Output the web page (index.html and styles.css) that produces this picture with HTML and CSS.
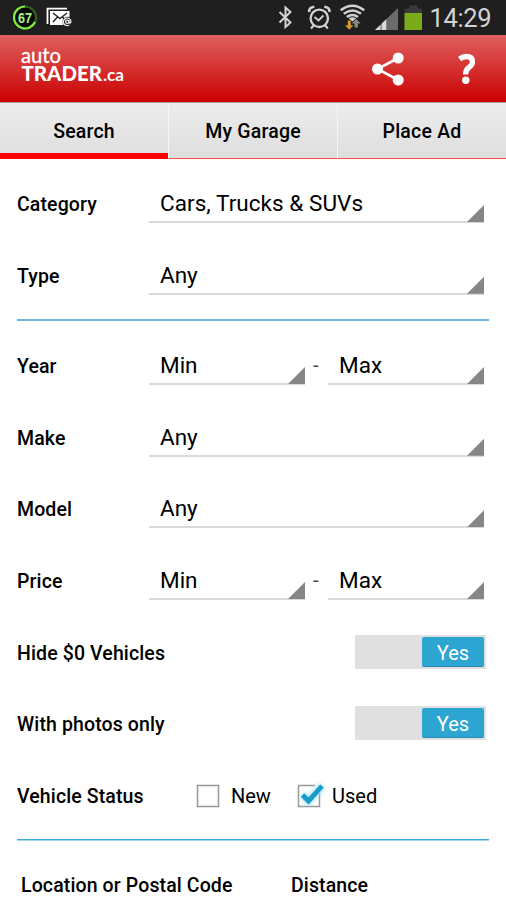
FILE: index.html
```html
<!DOCTYPE html>
<html lang="en">
<head>
<meta charset="utf-8">
<title>autoTRADER.ca</title>
<link rel="stylesheet" href="styles.css">
</head>
<body>
<div class="screen">
<div class="status">
  <svg width="506" height="35" viewBox="0 0 506 35">
    <circle cx="25" cy="17.500" r="11" fill="#050805" stroke="#33651e" stroke-width="2"/>
    <path d="M25 6.500A11 11 0 1 0 35 22" fill="none" stroke="#83ed40" stroke-width="2.200"/>
    <text class="pct" x="18" y="22.500" textLength="14" lengthAdjust="spacingAndGlyphs">67</text>
    <path d="M47.500 24V8.700H67" fill="none" stroke="#fff" stroke-width="1.800"/>
    <path d="M50 11h19.500v14H50z" fill="#fff"/>
    <path d="M53 13l7 5.500 7-5.500M53 22l4.500-5M65 20l-2.500-3" fill="none" stroke="#222" stroke-width="1.400"/>
    <circle cx="67.500" cy="21.800" r="5" fill="#222"/>
    <circle cx="67.300" cy="21.800" r="1.700" fill="none" stroke="#fff" stroke-width="1.100"/>
    <path d="M69 20v2.800q2 1 2-1.500a3.800 3.800 0 1 0-1.600 3.600" fill="none" stroke="#fff" stroke-width="1.100"/>
    <path d="M279.500 12l11 10.500-5 4.500V7.500l5 4.500-11 10.500" fill="none" stroke="#d2d2d2" stroke-width="2"/>
    <g fill="none" stroke="#d2d2d2">
      <circle cx="319.300" cy="18.300" r="8.700" stroke-width="2.300"/>
      <path d="M314.500 17l4 3.500 5-5" stroke-width="1.800"/>
      <path d="M309.300 12q-.8-4.500 5-5.300M329.300 12q.8-4.500-5-5.300" stroke-width="2.600"/>
      <path d="M313.500 25.500l-2.500 3M325.300 25.500l2.500 3" stroke-width="2.200"/>
      <path d="M340.700 10.300q11.800-9.200 23.500 0M343.800 13.800q8.700-6.500 17.200 0M346.800 17q5.600-4.200 11.200 0" stroke-width="2.400"/>
    </g>
    <path d="M348.700 18.500q3.700-2.500 7.400 0l-3.700 3z" fill="#d2d2d2"/>
    <path d="M347.800 20.500h3v4.700h2.700l-4.200 4.600-4.200-4.600h2.700z" fill="#d99530"/>
    <path d="M354.500 27.500v-4h-2.800l4.500-4.600 4.500 4.600h-2.800v4z" fill="#888"/>
    <path d="M375 30l23-22v22z" fill="#6b6b6b"/>
    <path d="M375 30l5.500-5.300V30zM381.700 23.600l4.500-4.300V30h-4.500z" fill="#dadada"/>
    <path d="M409.500 5.500h8v3h4.500V30h-17.500V8.500h5z" fill="#393939"/>
    <path d="M404.500 13H422v17h-17.500z" fill="#7aab18"/>
    <text class="clock" x="429.500" y="26.500" textLength="62">14:29</text>
  </svg>
</div>
<header class="bar">
  <svg width="506" height="67" viewBox="0 35 506 67">
    <text class="auto" x="21" y="62.500" textLength="40" lengthAdjust="spacingAndGlyphs">auto</text>
    <text class="trader" x="21.500" y="81" textLength="80.500" lengthAdjust="spacingAndGlyphs">TRADER</text>
    <text class="ca" x="103" y="81" textLength="21" lengthAdjust="spacingAndGlyphs">.ca</text>
    <path d="M398.200 58L377.500 69l20.700 11" fill="none" stroke="#fff" stroke-width="2.600"/>
    <circle cx="398.200" cy="58" r="5.500" fill="#fff"/><circle cx="377.500" cy="69" r="5.500" fill="#fff"/><circle cx="398.200" cy="80" r="5.500" fill="#fff"/>
    <path d="M459.500 59Q463 56.500 466.500 56.500Q472.500 56.500 472.500 61.700Q472.500 64.700 469.500 67Q465.500 69.500 465.500 74.500" fill="none" stroke="#fff" stroke-width="5.300"/>
    <circle cx="465.800" cy="80.200" r="3.700" fill="#fff"/>
  </svg>
</header>
<nav class="tabs"><div class="tab on">Search</div><div class="tab">My Garage</div><div class="tab">Place Ad</div></nav>
<main>
  <div class="row"><b>Category</b><div class="spin"><span class="cars">Cars, Trucks &amp; SUVs</span></div></div>
  <div class="row"><b>Type</b><div class="spin"><span>Any</span></div></div>
  <hr>
  <div class="row"><b>Year</b><div class="spin"><span>Min</span></div><i>-</i><div class="spin"><span>Max</span></div></div>
  <div class="row"><b>Make</b><div class="spin"><span>Any</span></div></div>
  <div class="row"><b>Model</b><div class="spin"><span>Any</span></div></div>
  <div class="row"><b>Price</b><div class="spin"><span>Min</span></div><i>-</i><div class="spin"><span>Max</span></div></div>
  <div class="row wide"><b>Hide $0 Vehicles</b><div class="switch"><div class="thumb">Yes</div></div></div>
  <div class="row wide"><b>With photos only</b><div class="switch"><div class="thumb">Yes</div></div></div>
  <div class="row checks"><b>Vehicle Status</b>
    <div class="check"><svg width="30" height="30"><path d="M4.500 4.500h21v21h-21z" fill="#fff" stroke="#999" stroke-width="1.500"/></svg><span>New</span></div>
    <div class="check"><svg width="30" height="30"><path d="M21 4.500H4.500v21h21V12" fill="#fff" stroke="#999" stroke-width="1.500"/><path class="glow" d="M8.500 14l6 6L28 5"/><path d="M8.500 14l6 6L28 5" fill="none" stroke="#189aca" stroke-width="4.800"/></svg><span>Used</span></div>
  </div>
  <hr class="strong">
  <div class="row heads"><b>Location or Postal Code</b><b>Distance</b></div>
</main>
</div>
</body>
</html>
```
FILE: styles.css
```css
* { box-sizing: border-box; }
body { margin: 0; background: #fff; color: #000; font-family: Roboto, sans-serif; }
.screen { width: 506px; height: 900px; overflow: hidden; }
svg { display: block; overflow: visible; }
.status { height: 35px; background: #1f1f1f; }
.pct { font: bold 14px "Liberation Sans", sans-serif; fill: #a9f08a; }
.clock { font: 400 25.500px Roboto, sans-serif; fill: #d2d2d2; }
.bar { height: 67px; background: linear-gradient(#df6060, #cb0000); }
.auto { font: 400 20.500px Lato, sans-serif; fill: #fff; stroke: #fff; stroke-width: .3px; }
.trader { font: 900 21.500px Lato, sans-serif; fill: #fff; }
.ca { font: 700 17px Lato, sans-serif; fill: #fff; }
.tabs { display: flex; height: 57px; border-top: 1px solid #a99; background: linear-gradient(#ececec, #dedede); }
.tab { flex: 1; text-align: center; font-weight: 500; font-size: 19.500px; line-height: 58px; letter-spacing: .2px; border-bottom: 1px solid #f05050; border-left: 1px solid #f5f5f5; }
.tab.on { border-bottom: 6px solid #f00; border-left: 0; }
main { padding: 9px 17px 0; }
.row { display: flex; height: 71.700px; font-size: 22.500px; }
.row b { flex: none; width: 132px; font-weight: 500; font-size: 19.500px; letter-spacing: .12px; line-height: 74px; white-space: nowrap; }
.spin { flex: 1; height: 55px; margin-right: 5px; padding-left: 11px; border-bottom: 2px solid #d9d9d9; display: flex; justify-content: space-between; line-height: 71px; }
.spin::after { content: ""; align-self: flex-end; width: 17px; height: 17px; margin-bottom: -1px; background: #868686; clip-path: polygon(100% 0, 100% 100%, 0 100%); }
.cars { letter-spacing: .05px; }
.row i { width: 18px; padding-left: 3px; font-style: normal; font-size: 20px; line-height: 70px; color: #444; }
hr { height: 2px; margin: 7.600px 0 9px; border: 0; background: #6bb5df; }
.wide { justify-content: space-between; }
.switch { width: 131px; height: 34px; margin: 18px 3px 0 0; padding: 2px; background: #e0e0e0; display: flex; justify-content: flex-end; }
.thumb { width: 62px; height: 30px; border-radius: 2px; background: #2da5d2; border-bottom: 1px solid #248cb4; color: #fff; font-size: 20px; line-height: 32px; text-align: center; }
.checks b { width: 176px; }
.check { display: flex; align-items: center; height: 71px; width: 101px; font-size: 20px; }
.check span { padding-top: 1px; }
.check svg { flex: none; margin-right: 8px; }
.glow { fill: none; stroke: #9fe0fa; stroke-width: 7px; filter: blur(2px); }
hr.strong { background: linear-gradient(#35a9dc 70%, #a4d9f0 70%); }
.heads { padding-left: 4px; }
.heads b { width: 270px; line-height: 72px; }
```
